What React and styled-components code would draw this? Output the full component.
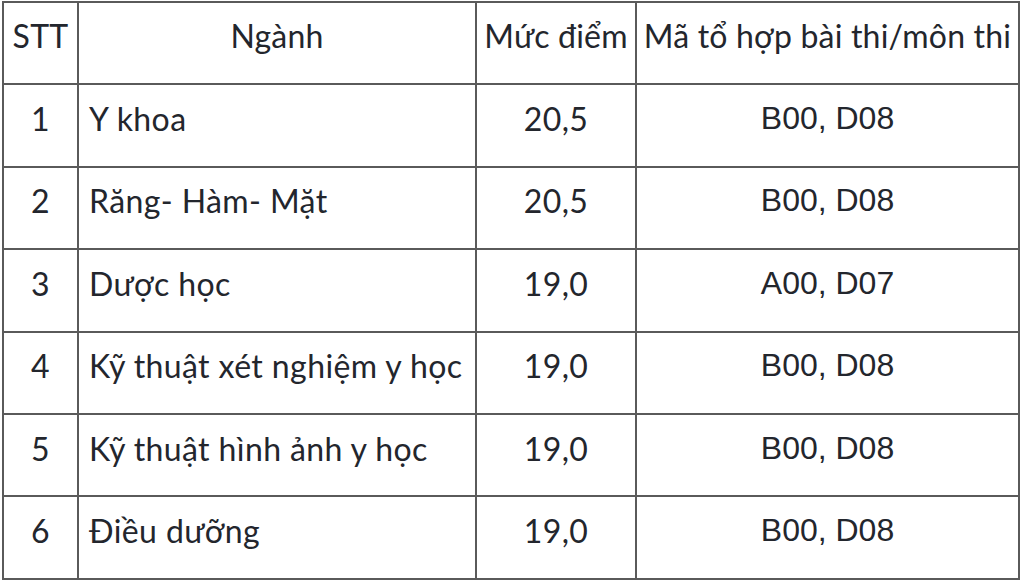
import styled, { createGlobalStyle } from 'styled-components';

const GlobalStyle = createGlobalStyle`
  html, body {
    margin: 0;
    padding: 0;
    background: #fff;
  }
`;

const Root = styled.div`
  padding: 1px 2px 0 2px;
`;

const Table = styled.table`
  width: 1016px;
  border-collapse: collapse;
  table-layout: fixed;
  font-family: Lato, 'Noto Sans', sans-serif;
  font-size: 32px;
  color: #23262d;
`;

const Row = styled.tr`
  height: 82.4px;
`;

const Cell = styled.td`
  border: 2px solid #5a5a5a;
  padding: 0 4px 14px ${(props) => (props.$left ? '10px' : '4px')};
  text-align: ${(props) => (props.$left ? 'left' : 'center')};
  vertical-align: middle;
  white-space: nowrap;
  letter-spacing: ${(props) => (props.$arial ? '0' : '0.4px')};
  font-family: ${(props) => (props.$arial ? "'Liberation Sans', Arial, sans-serif" : 'inherit')};
`;

const HeadCell = styled(Cell).attrs({ as: 'th' })`
  font-weight: normal;
  text-align: center;
  padding: 0 2px 16px 2px;
  letter-spacing: 0.2px;
`;

const rows = [
  ['1', 'Y khoa', '20,5', 'B00, D08'],
  ['2', 'Răng- Hàm- Mặt', '20,5', 'B00, D08'],
  ['3', 'Dược học', '19,0', 'A00, D07'],
  ['4', 'Kỹ thuật xét nghiệm y học', '19,0', 'B00, D08'],
  ['5', 'Kỹ thuật hình ảnh y học', '19,0', 'B00, D08'],
  ['6', 'Điều dưỡng', '19,0', 'B00, D08'],
];

export default function App() {
  return (
    <Root>
      <GlobalStyle />
      <Table>
        <colgroup>
          <col style={{ width: 75 }} />
          <col style={{ width: 398 }} />
          <col style={{ width: 160 }} />
          <col style={{ width: 383 }} />
        </colgroup>
        <thead>
          <Row>
            <HeadCell>STT</HeadCell>
            <HeadCell>Ngành</HeadCell>
            <HeadCell>Mức điểm</HeadCell>
            <HeadCell>Mã tổ hợp bài thi/môn thi</HeadCell>
          </Row>
        </thead>
        <tbody>
          {rows.map(([stt, name, score, code]) => (
            <Row key={stt}>
              <Cell>{stt}</Cell>
              <Cell $left>{name}</Cell>
              <Cell>{score}</Cell>
              <Cell $arial>{code}</Cell>
            </Row>
          ))}
        </tbody>
      </Table>
    </Root>
  );
}
